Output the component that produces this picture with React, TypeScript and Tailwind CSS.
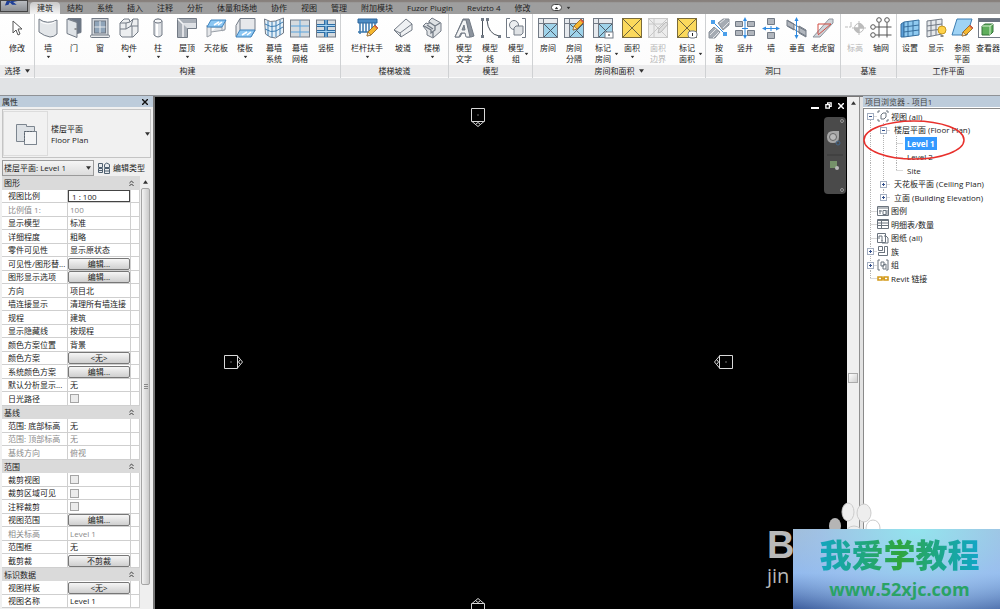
import type { ReactNode } from "react";
import { useState } from "react";

const TABS = [
  "建筑", "结构", "系统", "插入", "注释", "分析", "体量和场地", "协作",
  "视图", "管理", "附加模块", "Fuzor Plugin", "Revizto 4", "修改",
];

const S = "#727a85";

const roomBase = (
  <>
    <rect x="1.5" y="1.5" width="19" height="19" fill="#e6e9ed" stroke={S} />
    <path d="M1.5 6.500h19M6.500 1.500v19" stroke={S} fill="none" />
    <rect x="7" y="7" width="13" height="13" fill="#9fd3ea" />
    <path d="M7 7l13 13M20 7L7 20" stroke="#4b5a68" />
  </>
);

const pencil = (
  <>
    <path d="M11 19l1-4 7-7 3 3-7 7z" fill="#f5b72f" stroke="#8a5a1c" strokeWidth=".8" />
    <path d="M11 19l1-4 3 3z" fill="#f6e3c2" stroke="#8a5a1c" strokeWidth=".6" />
    <path d="M18 9l1-1 3 3-1 1z" fill="#d9574a" />
  </>
);

const areaBase = (
  <>
    <rect x="1.500" y="1.500" width="19" height="19" fill="#fbd95c" stroke="#7a6b3a" />
    <path d="M2 2l18 18M20 2L2 20" stroke="#6d6440" />
  </>
);

const ICONS: Record<string, ReactNode> = {
  modify: <path d="M7 4v12l3-3 2 5 2-1-2-5h4z" fill="#fff" stroke="#555" />,
  wall: (
    <>
      <path d="M2 2q8 6 18 1v14q-3 3-7 3-6-1-11-5z" fill="#e3e6e9" stroke={S} />
      <path d="M3.500 5q8 4 15-.5" stroke="#fff" fill="none" />
    </>
  ),
  door: (
    <>
      <path d="M5 1.500h13v14l-4 1V5z" fill="#6b7686" stroke={S} />
      <path d="M4 2l10 3.500v15L4 16.500z" fill="#dfe3e7" stroke={S} />
      <path d="M11.500 12h2" stroke="#444" />
    </>
  ),
  window: (
    <>
      <rect x="3" y="1.500" width="16" height="17" fill="#d3d7dc" stroke={S} />
      <rect x="5.500" y="4" width="11" height="12" fill="#8fa4b9" stroke={S} />
      <path d="M11 4v12M5.500 10h11" stroke="#e8ebee" />
      <rect x="1.500" y="18" width="19" height="2.500" rx="1" fill="#e8eaec" stroke={S} />
    </>
  ),
  component: (
    <>
      <path d="M2 6l4-4h5l1 3 3-3h5v13l-5 5H4l-2-2z" fill="#eceef0" stroke={S} />
      <path d="M2 6h6l4-1M8 6v6H2M8 12l5-3h7M14 9v11M15 2l-2 7" fill="none" stroke={S} />
    </>
  ),
  column: (
    <>
      <path d="M7 4q4-4 8 0v14q-4 4-8 0z" fill="#dde0e4" stroke={S} />
      <ellipse cx="11" cy="4" rx="4" ry="2" fill="#f6f7f8" stroke={S} />
      <path d="M10 7v12" stroke="#fff" strokeWidth="2" />
    </>
  ),
  roof: (
    <>
      <path d="M1.500 1.500h19v10h-9v9h-10z" fill="#a9afb7" stroke={S} />
      <path d="M2 2l5 5h13M7 7v13" stroke="#f3f4f6" strokeWidth="1.500" fill="none" />
      <path d="M7 7l4 4h9V7z" fill="#dde0e4" />
    </>
  ),
  ceiling: (
    <>
      <path d="M2 8v12l4-2V9M6 15l14-2V3" fill="#e4e6e9" stroke="#9aa0a8" />
      <path d="M6 10h11v4l3-2V3" fill="#eef0f2" stroke="#9aa0a8" />
      <path d="M6 3h15l-4 7H2z" fill="#8cc7f3" stroke="#3f83bd" />
      <path d="M9 8l5-3M13 8l4-3" stroke="#fff" strokeWidth="1.500" />
    </>
  ),
  floor: (
    <>
      <path d="M6 1.500h15v12l-4 6h-15v-11z" fill="#e6e8eb" stroke={S} />
      <path d="M6 2v11" stroke={S} />
      <path d="M6 13h15l-4 7H2z" fill="#8cc7f3" stroke="#3f83bd" />
      <path d="M8 18l5-3M13 18l4-3" stroke="#fff" strokeWidth="1.500" />
    </>
  ),
  curtainSystem: (
    <>
      <path d="M1.500 2q6 4 11 2l8-3v15l-8 5q-6 0-10-4z" fill="#e3f0f8" stroke={S} />
      <path d="M2 7q6 4 11 2l7-4M2 12q6 4 11 2l7-4M5 4v15M9 5v15.500M13 4v16M17 3v15" fill="none" stroke="#3f7fb4" />
    </>
  ),
  curtainGrid: (
    <>
      <rect x="1.500" y="3" width="19" height="17" fill="#d5dade" stroke={S} />
      <path d="M11 3v17M2 9h18M2 15h18" stroke="#58a3dd" />
    </>
  ),
  mullion: (
    <>
      <rect x="1.500" y="3" width="19" height="17" fill="#d5dade" stroke={S} />
      <path d="M2 8.500h18M2 14.500h18" stroke="#2f6ea5" strokeWidth="3" />
      <path d="M11 3v17" stroke="#2f6ea5" strokeWidth="4" />
      <path d="M2 8.500h18M2 14.500h18M11 3v17" stroke="#a7d6f5" />
    </>
  ),
  railing: (
    <>
      <path d="M2 2h19v4H2z" fill="#4c8cc4" stroke="#2d659a" />
      <path d="M4 6v11M7 6v9M10 6v9M13 6v8M16 6v6M19 6v4M2 15h10" stroke="#3977ad" strokeWidth="1.500" />
      {pencil}
    </>
  ),
  ramp: (
    <>
      <path d="M2 13L14 2l6 5v6L9 20z" fill="#eff1f3" stroke={S} />
      <path d="M9 20l-1-4L20 7M8 16l-6-3" stroke={S} fill="none" />
    </>
  ),
  stair: (
    <>
      <path d="M2 9l3-3 3 1V4l3-3 9 5v8l-8 7-6-3v-4z" fill="#dfe2e5" stroke={S} />
      <path d="M3 9l7 4v3l4-3v-4l5-3M8 5l6 4M6 8l6 4M12 20v-5" stroke={S} fill="none" strokeWidth="1.300" />
    </>
  ),
  modelText: (
    <>
      <path d="M2 20l8-18h6l5 17-3 1h-4l-1-4H9l-2 4z" fill="#8c939d" stroke={S} />
      <path d="M2 20l8-17h3l4 17h-4l-1-4H8l-2 4z" fill="#f3f4f5" stroke={S} />
      <path d="M9 13l2-5 1 5z" fill="#8c939d" stroke={S} />
    </>
  ),
  modelLine: (
    <>
      <path d="M3.500 3v16M8 3q1 14 12 16" fill="none" stroke="#4a525c" />
      <path d="M2 1h3v3H2zM2 18h3v3H2zM7 1h3v3H7zM19 18h3v3h-3z" fill={S} />
    </>
  ),
  modelGroup: (
    <>
      <path d="M5 1.500H1.500v19H5M17 1.500h3.500v19H17" fill="none" stroke={S} />
      <circle cx="9" cy="8" r="4.500" fill="#eceef0" stroke={S} />
      <path d="M9 11l2-2h7v7l-2 2H9z" fill="#dfe2e5" stroke={S} />
    </>
  ),
  room: roomBase,
  roomSeparator: <>{roomBase}<g transform="translate(-1 -6)">{pencil}</g></>,
  tagRoom: (
    <>
      {roomBase}
      <rect x="13" y="15" width="8" height="6" fill="#fff" stroke={S} />
      <path d="M17 17v2" stroke="#222" />
    </>
  ),
  area: areaBase,
  areaBoundary: (
    <>
      <rect x="1.500" y="1.500" width="19" height="19" fill="#ededed" stroke="#c8c8c8" />
      <path d="M2 7h18M7 2v18M2 2l18 18M20 2L2 20" stroke="#c8c8c8" />
      <path d="M11 16l1-4 7-7 2 2-7 8z" fill="#ddd" stroke="#bbb" />
    </>
  ),
  tagArea: (
    <>
      {areaBase}
      <rect x="12" y="14" width="9" height="7" rx="3" fill="#fff" stroke={S} />
      <path d="M16.500 16v3" stroke="#222" />
    </>
  ),
  byFace: (
    <>
      <path d="M10 6l5-4h6v6l-6 5zM1 15l5-5 6 5-5 6H1z" fill="#a5abb3" stroke="#8a919a" />
      <path d="M12 6l5-4M15 11l6-6M2 18l6-6M5 21l6-6" stroke="#e3e5e8" />
      <path d="M5 5l12 12" stroke="#2f8ae0" />
      <path d="M3 3h4v4H3zM15 15h4v4h-4z" fill="#4b9fea" />
    </>
  ),
  shaft: (
    <>
      <path d="M1.500 4.500h7v5h-7zM13.500 4.500h7v5h-7zM1.500 13.500h7v5h-7zM13.500 13.500h7v5h-7z" fill="#b1b6bd" stroke={S} />
      <path d="M11 3v16M8 11.500h6" stroke="#2f8ae0" />
      <path d="M11 0l2 4H9zM11 22l2-4H9z" fill="#2f8ae0" />
    </>
  ),
  wallOpening: (
    <>
      <path d="M7.500 1.500h7v6h-7zM7.500 15.500h7v6h-7z" fill="#b1b6bd" stroke={S} />
      <path d="M4 11.500h14M11 9v5" stroke="#2f8ae0" />
      <path d="M2 11.500l4-2v4zM20 11.500l-4-2v4z" fill="#2f8ae0" />
    </>
  ),
  vertical: (
    <>
      <path d="M1 3l7 4v6L1 9zM13 9l7 4v7l-7-4z" fill="#b1b6bd" stroke={S} />
      <path d="M2 4l18 10M2 9l18 10" stroke={S} />
      <path d="M10.500 2v18" stroke="#2f8ae0" />
      <path d="M10.500 0l2 4h-4zM10.500 22l2-4h-4z" fill="#2f8ae0" />
    </>
  ),
  dormer: (
    <>
      <path d="M1 20L17 2h4v4L8 20z" fill="#d0d4d9" stroke="#8d949d" />
      <path d="M6 17V7h13L6 18" fill="none" stroke="#d04a40" />
    </>
  ),
  level: (
    <g stroke="#bbb" fill="none">
      <path d="M1 10h3M5 10h2M7 5v5M8 11h14M15 4v14" />
      <circle cx="15" cy="11" r="4.500" />
      <path d="M15 6.500v4.500h4.500A4.500 4.500 0 0015 6.500zM15 15.500V11h-4.500a4.500 4.500 0 004.500 4.500z" fill="#bbb" />
    </g>
  ),
  grid: (
    <g stroke="#555" fill="none">
      <circle cx="9" cy="3" r="2.300" />
      <circle cx="17" cy="3" r="2.300" />
      <circle cx="3" cy="10" r="2.300" />
      <circle cx="3" cy="18" r="2.300" />
      <path d="M9 5.500v15M17 5.500v15M5.500 10h16M5.500 18h16" />
    </g>
  ),
  setPlane: (
    <>
      <path d="M2 7l3-2v15H2z" fill="#5c9fd8" stroke="#376f9e" />
      <path d="M5 5l15-2v15L5 20z" fill="#8fcaf0" stroke="#376f9e" />
      <path d="M9 5v15M14 4v15M5 10l15-2M5 15l15-2" stroke="#376f9e" fill="none" />
    </>
  ),
  show: (
    <>
      <path d="M2 4l15-2v15L2 20z" fill="#e5e8eb" stroke={S} />
      <path d="M6 4v15M11 3v15M2 9l15-2M2 14l15-2" stroke={S} fill="none" />
      <circle cx="17" cy="13" r="4" fill="#ffd24a" stroke="#c79a20" />
      <path d="M15.500 18h3v2h-3z" fill="#888" />
    </>
  ),
  refPlane: (
    <>
      <path d="M6 2h15l-5 16H1z" fill="#9fd3f5" stroke="#3c7db1" />
      {pencil}
    </>
  ),
  viewer: (
    <>
      <rect x="1.500" y="1.500" width="22" height="19" fill="#fff" stroke={S} />
      <path d="M2 2h21v3H2z" fill="#6a7380" />
      <path d="M5 9l3-2h8v8l-3 3H5z" fill="#5fae5c" stroke="#35733a" />
      <path d="M5 9h8v9M13 9l3-2" stroke="#d6efd0" fill="none" />
    </>
  ),
};

type Tool = { icon: string; label: string[]; size?: "m" | "l"; drop?: "below" | "side"; off?: boolean };
type Panel = { title: string; width: string; pad?: string; drop?: boolean; tools: Tool[] };

const PANELS: Panel[] = [
  { title: "选择", width: "w-[35px]", pad: "pl-1", drop: true, tools: [{ icon: "modify", label: ["修改"] }] },
  {
    title: "构建",
    width: "w-[306px]",
    tools: [
      { icon: "wall", label: ["墙"], drop: "below" },
      { icon: "door", label: ["门"] },
      { icon: "window", label: ["窗"] },
      { icon: "component", label: ["构件"], size: "m", drop: "below" },
      { icon: "column", label: ["柱"], drop: "below" },
      { icon: "roof", label: ["屋顶"], size: "m", drop: "below" },
      { icon: "ceiling", label: ["天花板"] },
      { icon: "floor", label: ["楼板"], size: "m", drop: "below" },
      { icon: "curtainSystem", label: ["幕墙", "系统"] },
      { icon: "curtainGrid", label: ["幕墙", "网格"] },
      { icon: "mullion", label: ["竖梃"] },
    ],
  },
  {
    title: "楼梯坡道",
    width: "w-[108px]",
    pad: "pl-1.5",
    tools: [
      { icon: "railing", label: ["栏杆扶手"], size: "l", drop: "below" },
      { icon: "ramp", label: ["坡道"], size: "m" },
      { icon: "stair", label: ["楼梯"], drop: "below" },
    ],
  },
  {
    title: "模型",
    width: "w-[84px]",
    pad: "pl-0.5",
    tools: [
      { icon: "modelText", label: ["模型", "文字"] },
      { icon: "modelLine", label: ["模型", "线"] },
      { icon: "modelGroup", label: ["模型", "组"], drop: "side" },
    ],
  },
  {
    title: "房间和面积",
    width: "w-[173px]",
    pad: "pl-0.5",
    drop: true,
    tools: [
      { icon: "room", label: ["房间"] },
      { icon: "roomSeparator", label: ["房间", "分隔"] },
      { icon: "tagRoom", label: ["标记", "房间"], size: "m", drop: "side" },
      { icon: "area", label: ["面积"], drop: "below" },
      { icon: "areaBoundary", label: ["面积", "边界"], off: true },
      { icon: "tagArea", label: ["标记", "面积"], size: "m", drop: "side" },
    ],
  },
  {
    title: "洞口",
    width: "w-[135px]",
    tools: [
      { icon: "byFace", label: ["按", "面"] },
      { icon: "shaft", label: ["竖井"] },
      { icon: "wallOpening", label: ["墙"] },
      { icon: "vertical", label: ["垂直"] },
      { icon: "dormer", label: ["老虎窗"] },
    ],
  },
  {
    title: "基准",
    width: "w-[56px]",
    pad: "pl-px",
    tools: [
      { icon: "level", label: ["标高"], off: true },
      { icon: "grid", label: ["轴网"] },
    ],
  },
  {
    title: "工作平面",
    width: "min-w-[103px]",
    tools: [
      { icon: "setPlane", label: ["设置"] },
      { icon: "show", label: ["显示"] },
      { icon: "refPlane", label: ["参照", "平面"] },
      { icon: "viewer", label: ["查看器"] },
    ],
  },
];

const TOOL_WIDTH = { s: "w-[26px]", m: "w-8", l: "w-10" };

function Caret({ className = "" }: { className?: string }) {
  return (
    <svg viewBox="0 0 6 4" className={`h-[4px] w-[5px] shrink-0 ${className}`} aria-hidden="true">
      <path d="M0 0h6L3 4z" fill="#333" />
    </svg>
  );
}

function ToolButton({ tool }: { tool: Tool }) {
  return (
    <button
      disabled={tool.off}
      className={`relative flex shrink-0 flex-col items-center pt-[3px] whitespace-nowrap hover:bg-sky-50 disabled:text-[#b5b5b5] ${TOOL_WIDTH[tool.size ?? "s"]}`}
    >
      <svg viewBox="0 0 22 22" className="mb-[3px] size-[22px] overflow-visible" fill="none" aria-hidden="true">
        {ICONS[tool.icon]}
      </svg>
      {tool.label.map((t) => (
        <span key={t} className="leading-[11px]">{t}</span>
      ))}
      {tool.drop === "below" && <Caret className="mt-0.5 scale-75" />}
      {tool.drop === "side" && <Caret className="absolute right-0 bottom-[9px] scale-75" />}
    </button>
  );
}

function Ribbon() {
  const [active, setActive] = useState("建筑");

  return (
    <header className="shrink-0 border-b border-[#8f9296] bg-[#e1e3e5] pb-[17px]">
      <div className="flex h-[14px] items-end bg-gradient-to-b from-[#87807c] from-10% to-[#9e9e9e] to-20%">
        <button aria-label="应用程序菜单" className="h-3 w-7 self-start overflow-hidden border border-[#444] bg-gradient-to-b from-[#b9bcc0] to-[#8c8f93]">
          <svg viewBox="0 0 26 11" className="h-[10px] w-[26px]" aria-hidden="true">
            <path d="M5 0h4L7 4l-4 1zM10 0h7l-5 1 4 3h-5L8 1z" fill="#1d3e96" />
          </svg>
        </button>
        <nav className="flex pl-0.5">
          {TABS.map((t) => (
            <button
              key={t}
              onClick={() => setActive(t)}
              className={`h-[12px] px-[7px] leading-[12px] whitespace-nowrap text-[#222] ${
                t === active ? "rounded-t-sm bg-gradient-to-b from-[#c9c9c9] to-[#f4f4f4]" : ""
              }`}
            >
              {t}
            </button>
          ))}
        </nav>
        <button aria-label="最小化功能区" className="mb-[3px] ml-[14px] flex items-center gap-1">
          <span className="flex h-[7px] w-[11px] items-center justify-center rounded-sm border border-[#444] bg-white">
            <Caret className="rotate-180 scale-75" />
          </span>
          <Caret className="scale-75" />
        </button>
      </div>
      <div className="flex h-[64px] overflow-hidden bg-[#f7f7f7]">
        {PANELS.map((p) => (
          <section
            key={p.title}
            className={`flex shrink-0 flex-col border-r border-[#cfd1d3] bg-gradient-to-b from-white to-[#fbfbfb] last:shrink last:grow last:border-r-0 ${p.width}`}
          >
            <div className={`flex h-[51px] shrink-0 ${p.pad ?? ""}`}>
              {p.tools.map((t) => (
                <ToolButton key={t.icon} tool={t} />
              ))}
            </div>
            <h2 className="flex h-[12px] shrink-0 items-center justify-center gap-1 bg-[#ececed] leading-[12px]">
              {p.title}
              {p.drop && <Caret />}
            </h2>
          </section>
        ))}
      </div>
    </header>
  );
}

type Prop = { name: string; value?: string; kind?: "head" | "button" | "check" | "input" | "dim" };

const PROPS: Prop[] = [
  { name: "图形", kind: "head" },
  { name: "视图比例", value: "1 : 100", kind: "input" },
  { name: "比例值 1:", value: "100", kind: "dim" },
  { name: "显示模型", value: "标准" },
  { name: "详细程度", value: "粗略" },
  { name: "零件可见性", value: "显示原状态" },
  { name: "可见性/图形替...", value: "编辑...", kind: "button" },
  { name: "图形显示选项", value: "编辑...", kind: "button" },
  { name: "方向", value: "项目北" },
  { name: "墙连接显示", value: "清理所有墙连接" },
  { name: "规程", value: "建筑" },
  { name: "显示隐藏线", value: "按规程" },
  { name: "颜色方案位置", value: "背景" },
  { name: "颜色方案", value: "<无>", kind: "button" },
  { name: "系统颜色方案", value: "编辑...", kind: "button" },
  { name: "默认分析显示...", value: "无" },
  { name: "日光路径", kind: "check" },
  { name: "基线", kind: "head" },
  { name: "范围: 底部标高", value: "无" },
  { name: "范围: 顶部标高", value: "无", kind: "dim" },
  { name: "基线方向", value: "俯视", kind: "dim" },
  { name: "范围", kind: "head" },
  { name: "裁剪视图", kind: "check" },
  { name: "裁剪区域可见", kind: "check" },
  { name: "注释裁剪", kind: "check" },
  { name: "视图范围", value: "编辑...", kind: "button" },
  { name: "相关标高", value: "Level 1", kind: "dim" },
  { name: "范围框", value: "无" },
  { name: "截剪裁", value: "不剪裁", kind: "button" },
  { name: "标识数据", kind: "head" },
  { name: "视图样板", value: "<无>", kind: "button" },
  { name: "视图名称", value: "Level 1" },
];

function PropValue({ prop }: { prop: Prop }) {
  switch (prop.kind) {
    case "button":
      return (
        <button aria-label={`${prop.name} ${prop.value}`} className="block h-[12px] w-full rounded-[2px] border border-[#777] bg-gradient-to-b from-[#f6f6f6] to-[#cfcfcf] leading-[10px]">
          {prop.value}
        </button>
      );
    case "check":
      return (
        <input
          type="checkbox"
          aria-label={prop.name}
          className="mx-0.5 block size-[9px] appearance-none border border-[#a5a5a5] bg-[#ececec] checked:bg-sky-500"
        />
      );
    case "input":
      return (
        <input
          aria-label={prop.name}
          defaultValue={prop.value}
          className="block h-[12px] w-full border border-[#444] bg-white px-[3px] leading-[10px] outline-none"
        />
      );
    default:
      return <span className="block truncate pl-0.5">{prop.value}</span>;
  }
}

function PropertyRow({ prop }: { prop: Prop }) {
  if (prop.kind === "head") {
    return (
      <tr className="odd:h-[14px] even:h-[13px]">
        <th colSpan={3} className="bg-[#dadada] px-0.5 text-left font-normal">
          <div className="flex items-center justify-between pr-1">
            {prop.name}
            <svg viewBox="0 0 6 8" className="h-[7px] w-[5px]" fill="none" stroke="#222" aria-hidden="true">
              <path d="M.5 3.500L3 1l2.500 2.500M.5 7L3 4.500 5.500 7" />
            </svg>
          </div>
        </th>
      </tr>
    );
  }
  return (
    <tr className={`odd:h-[14px] even:h-[13px] ${prop.kind === "dim" ? "text-[#8a8a8a]" : ""}`}>
      <td className="truncate border-r border-b border-[#cfcfcf] pl-1.5">{prop.name}</td>
      <td className="border-r border-b border-[#cfcfcf]">
        <PropValue prop={prop} />
      </td>
      <td className="border-r border-b border-[#cfcfcf]" />
    </tr>
  );
}

function PropertiesPanel() {
  return (
    <aside className="flex w-[153px] shrink-0 flex-col bg-[#f0f0f0]">
      <div className="flex h-[11px] shrink-0 items-center justify-between bg-[#bdccdb] pr-[5px] pl-0.5">
        <h2>属性</h2>
        <button aria-label="关闭">
          <svg viewBox="0 0 6 6" className="size-[6px]" stroke="#111" strokeWidth="1.400" aria-hidden="true">
            <path d="M0 0l6 6M6 0L0 6" />
          </svg>
        </button>
      </div>
      <button className="mx-0.5 mt-0.5 flex h-[49px] shrink-0 items-center border border-[#c4c4c4] bg-[#f1f1f1] text-left">
        <span className="flex h-[45px] w-[45px] items-center justify-center border border-[#dcdcdc]">
          <svg viewBox="0 0 22 22" className="size-[22px]" aria-hidden="true">
            <path d="M1.500 1.500h10v2h8v5h2v13h-12v-3h-8z" fill="#dde1e5" stroke="#7c858f" />
            <path d="M9.500 21.500v-13h12v13z" fill="#f4f5f6" stroke="#7c858f" />
            <path d="M9.500 18V8.500h9" fill="none" stroke="#5d6670" strokeDasharray="2 1" />
          </svg>
        </span>
        <span className="grow pl-[3px] leading-[11px]">
          <span className="block">楼层平面</span>
          <span className="block">Floor Plan</span>
        </span>
        <Caret />
      </button>
      <div className="mt-px flex h-[17px] shrink-0 items-center pl-0.5">
        <div className="relative">
          <select aria-label="视图类型" className="block h-4 w-[92px] appearance-none border border-[#9a9a9a] bg-gradient-to-b from-[#f5f5f5] to-[#dcdcdc] pl-px">
            <option>楼层平面: Level 1</option>
          </select>
          <Caret className="pointer-events-none absolute top-1.5 right-[3px]" />
        </div>
        <button className="ml-1 flex items-center gap-[3px]">
          <svg viewBox="0 0 12 12" className="size-[12px]" fill="#e8ebee" stroke="#4f6070" aria-hidden="true">
            <path d="M.5 1.500h4v4h-4zM.5 6.500h4v4h-4zM6.500 6.500h5v5h-5zM6.500 5.500v-3q2-3 5 0v3zM6 9h6M0 8.500h4" />
          </svg>
          编辑类型
        </button>
      </div>
      <div className="flex min-h-0 grow overflow-hidden pl-0.5">
        <div className="w-[138px] shrink-0">
          <table className="w-full table-fixed border-separate border-spacing-0 bg-white leading-[12px]">
            <colgroup>
              <col className="w-[66px]" />
              <col className="w-[63px]" />
              <col />
            </colgroup>
            <tbody>
              {PROPS.map((p) => (
                <PropertyRow key={p.name} prop={p} />
              ))}
            </tbody>
          </table>
        </div>
        <div className="flex w-[11px] flex-col items-center bg-[#efefef]">
          <Caret className="my-1 rotate-180" />
          <div className="mb-6 flex w-[9px] grow flex-col items-center justify-center gap-px rounded-[2px] border border-[#a5a5a5] bg-gradient-to-r from-[#f3f3f3] to-[#c9c9c9]">
            <span className="h-px w-[4px] bg-[#888]" />
            <span className="h-px w-[4px] bg-[#888]" />
            <span className="h-px w-[4px] bg-[#888]" />
          </div>
        </div>
      </div>
    </aside>
  );
}

// Elevation marker: a square with an arrow pointing into the plan
function ElevationMark({ className }: { className: string }) {
  return (
    <svg viewBox="0 0 14 20" className={`absolute h-[20px] w-[14px] ${className}`} fill="none" stroke="#d8d8d8" aria-hidden="true">
      <path d="M.5 .5h13v13H.5zM1 13.500l6 5 6-5M5 16l2-1.500L9 16" />
      <path d="M6.500 7h1" />
    </svg>
  );
}

function DrawingArea() {
  return (
    <main className="relative flex min-w-0 grow border-t border-l-2 border-[#777] bg-black">
      <div className="relative min-w-0 grow overflow-hidden">
        <ElevationMark className="top-[11px] left-[316px]" />
        <ElevationMark className="top-[255px] left-[72px] -rotate-90" />
        <ElevationMark className="top-[255px] right-[117px] rotate-90" />
        <ElevationMark className="top-[500px] left-[316px] rotate-180" />
        <div className="absolute top-[5px] right-[3px] flex items-center gap-1.5">
          <button aria-label="最小化" className="mt-1 h-[2px] w-[8px] bg-white" />
          <button aria-label="还原">
            <svg viewBox="0 0 8 8" className="size-[7px]" fill="none" stroke="#fff" strokeWidth="1.500" aria-hidden="true">
              <path d="M1 3h4v4H1zM3 2.500V1h4v4H5.500" />
            </svg>
          </button>
          <button aria-label="关闭视图">
            <svg viewBox="0 0 6 6" className="size-[6px]" stroke="#fff" strokeWidth="1.500" aria-hidden="true">
              <path d="M0 0l6 6M6 0L0 6" />
            </svg>
          </button>
        </div>
        <div className="absolute top-[20px] right-px flex h-[77px] w-[22px] flex-col items-center rounded-sm bg-[#4a4a4a]">
          <svg viewBox="0 0 22 77" className="h-[77px] w-[22px]" fill="none" aria-hidden="true">
            <circle cx="18" cy="4" r="1.500" stroke="#999" />
            <path d="M3 20q0-6 6-6h6v6q0 6-6 6t-6-6z" fill="#a8a8a8" />
            <circle cx="9" cy="20" r="3.500" fill="#bbb" stroke="#666" />
            <circle cx="14" cy="26" r="2" stroke="#42658a" />
            <path d="M3 38h16" stroke="#383838" />
            <path d="M6 44h7v7H6z" fill="#76926a" />
            <circle cx="13" cy="51" r="2" fill="#bbb" />
            <circle cx="18" cy="73" r="1.500" stroke="#999" />
          </svg>
        </div>
      </div>
      <div className="flex w-[12px] shrink-0 flex-col items-center justify-center bg-[#efefef]">
        <Caret className="mt-1 mb-auto rotate-180" />
        <div className="mt-[42px] mb-auto size-[10px] border border-[#aaa] bg-gradient-to-br from-white to-[#cfcfcf]" />
      </div>
      <div className="w-[4px] shrink-0 border-l border-[#8f8f8f] bg-[#e3e3e3]" />
    </main>
  );
}

type Branch = { label: string; depth: number; toggle?: "+" | "-"; icon?: ReactNode; last?: boolean; first?: boolean };

const TREE: Branch[] = [
  {
    label: "视图 (all)", depth: 0, toggle: "-", first: true,
    icon: <path d="M3 1H1v2M9 1h2v2M3 11H1V9M9 11h2V9M4 5l2-2h3v4L7 9H4z" />,
  },
  { label: "楼层平面 (Floor Plan)", depth: 1, toggle: "-" },
  { label: "Level 1", depth: 2 },
  { label: "Level 2", depth: 2 },
  { label: "Site", depth: 2, last: true },
  { label: "天花板平面 (Ceiling Plan)", depth: 1, toggle: "+" },
  { label: "立面 (Building Elevation)", depth: 1, toggle: "+", last: true },
  { label: "图例", depth: 0, icon: <path d="M.5 1.500h11v9H.5zM1 3h10M3 5v4M2 6h3M6 5.500h3v4H6zM10 5v5" /> },
  { label: "明细表/数量", depth: 0, icon: <path d="M.5 1.500h11v9H.5zM1 2.500h10M1 5h10M1 7.500h10M4.500 3v7" /> },
  { label: "图纸 (all)", depth: 0, icon: <path d="M.5 1.500h8v9h-8zM2 7V4h3v5M7 4h2l2 2v5H5V8" /> },
  { label: "族", depth: 0, toggle: "+", icon: <path d="M1.500 1.500h4v4h-4zM7.500 1.500h3v9h-9v-3h6zM7.500 2v6" /> },
  { label: "组", depth: 0, toggle: "+", icon: <path d="M3 1H1v10h2M9 1h2v10H9M4 3h3v4H4zM6 6l3-1v5H6z" /> },
  { label: "Revit 链接", depth: 0, last: true, icon: <path d="M1 5h4v3H1zM7 5h4v3H7zM4 6.500h4" stroke="#d39a1b" strokeWidth="1.600" /> },
];

function Guide({ node }: { node: Branch }) {
  return (
    <svg viewBox="0 0 13 14" className="h-[14px] w-[13px] shrink-0" fill="none" stroke="#b4b4b4" aria-hidden="true">
      <path d={`M6.500 ${node.first ? 7 : 0}V${node.last ? 7 : 14}M6.500 7.500H13`} strokeDasharray="1 1" />
      {node.toggle && (
        <>
          <rect x="3.500" y="4.500" width="6" height="6" fill="#fff" stroke="#a3aec0" />
          <path d={node.toggle === "+" ? "M5 7.500h3M6.500 6v3" : "M5 7.500h3"} stroke="#33508c" />
        </>
      )}
    </svg>
  );
}

function ProjectBrowser() {
  const [selected, setSelected] = useState("Level 1");

  return (
    <aside className="relative flex w-[137px] shrink-0 flex-col bg-white">
      <h2 className="h-[11px] shrink-0 bg-[#bdccdb] pl-0.5 leading-[11px] text-[#444]">项目浏览器 - 项目1</h2>
      <ul className="mt-px grow border-t border-l border-[#8a8a8a]">
        {TREE.map((n) => (
          <li key={n.label} className="flex items-center whitespace-nowrap odd:h-[14px] even:h-[13px]">
            {n.depth > 0 && (
              <svg viewBox="0 0 13 14" className="h-[14px] w-[13px] shrink-0" aria-hidden="true">
                <path d="M6.500 0v14" stroke="#b4b4b4" strokeDasharray="1 1" />
              </svg>
            )}
            {n.depth > 1 && (
              <svg viewBox="0 0 13 14" className="h-[14px] w-[13px] shrink-0" aria-hidden="true">
                <path d="M6.500 0v14" stroke="#b4b4b4" strokeDasharray="1 1" />
              </svg>
            )}
            <Guide node={n} />
            {n.icon && (
              <svg viewBox="0 0 12 12" className="size-[12px] shrink-0" fill="none" stroke="#6b747e" aria-hidden="true">
                {n.icon}
              </svg>
            )}
            <button
              onClick={() => setSelected(n.label)}
              className={`px-0.5 leading-[13px] ${n.depth > 0 ? "ml-0.5" : ""} ${
                n.label === selected ? "bg-[#3399ff] font-bold text-white" : ""
              }`}
            >
              {n.label}
            </button>
          </li>
        ))}
      </ul>
      <svg viewBox="0 0 104 42" className="pointer-events-none absolute top-[24px] left-0 h-[42px] w-[104px]" aria-hidden="true">
        <ellipse cx="51" cy="20" rx="50" ry="19" fill="none" stroke="#e8302c" strokeWidth="1.500" />
      </svg>
    </aside>
  );
}

function SiteBadge() {
  return (
    <div className="absolute right-0 bottom-0">
      <div className="absolute right-[207px] bottom-5 flex w-[26px] flex-col text-[#b9b9b9]">
        <span className="font-['Liberation_Sans',sans-serif] text-[38px] leading-[36px] font-bold">B</span>
        <span className="text-[20px] leading-[26px]">jin</span>
      </div>
      <svg viewBox="0 0 60 40" className="absolute right-[117px] bottom-[68px] h-[40px] w-[60px]" fill="#eee" stroke="#ccc" aria-hidden="true">
        <ellipse cx="12" cy="25" rx="6" ry="8" fill="#b5b5b5" stroke="none" />
        <ellipse cx="25" cy="11" rx="6" ry="9" />
        <ellipse cx="41" cy="12" rx="7" ry="9" />
        <ellipse cx="50" cy="27" rx="7" ry="8" fill="#fff" />
        <ellipse cx="31" cy="34" rx="9" ry="9" />
      </svg>
      <div className="relative flex h-20 w-[207px] flex-col items-center bg-[radial-gradient(ellipse_at_60%_0%,#93e4ee_0%,#9fc6f0b0_55%,transparent_100%),linear-gradient(to_bottom,#a3b8c8_0%,#8db4ec_55%,#3c5c9c_100%)] pt-1.5 pl-1.5">
        <p className="bg-gradient-to-r from-[#14a5c0] via-[#2fa53c] to-[#14a5c8] bg-clip-text text-[32px] leading-[40px] font-black text-transparent">
          我爱学教程
        </p>
        <a href="#site" className="text-[18px] leading-[28px] font-bold text-[#2aa365]">
          www.52xjc.com
        </a>
      </div>
    </div>
  );
}

export default function App() {
  return (
    <div className="relative flex h-screen flex-col overflow-hidden bg-[#e1e3e5] font-['Open_Sans','Noto_Sans_CJK_SC',sans-serif] text-[8px] leading-[12px] text-[#222]">
      <Ribbon />
      <div className="flex min-h-0 grow">
        <PropertiesPanel />
        <DrawingArea />
        <ProjectBrowser />
      </div>
      <SiteBadge />
    </div>
  );
}
